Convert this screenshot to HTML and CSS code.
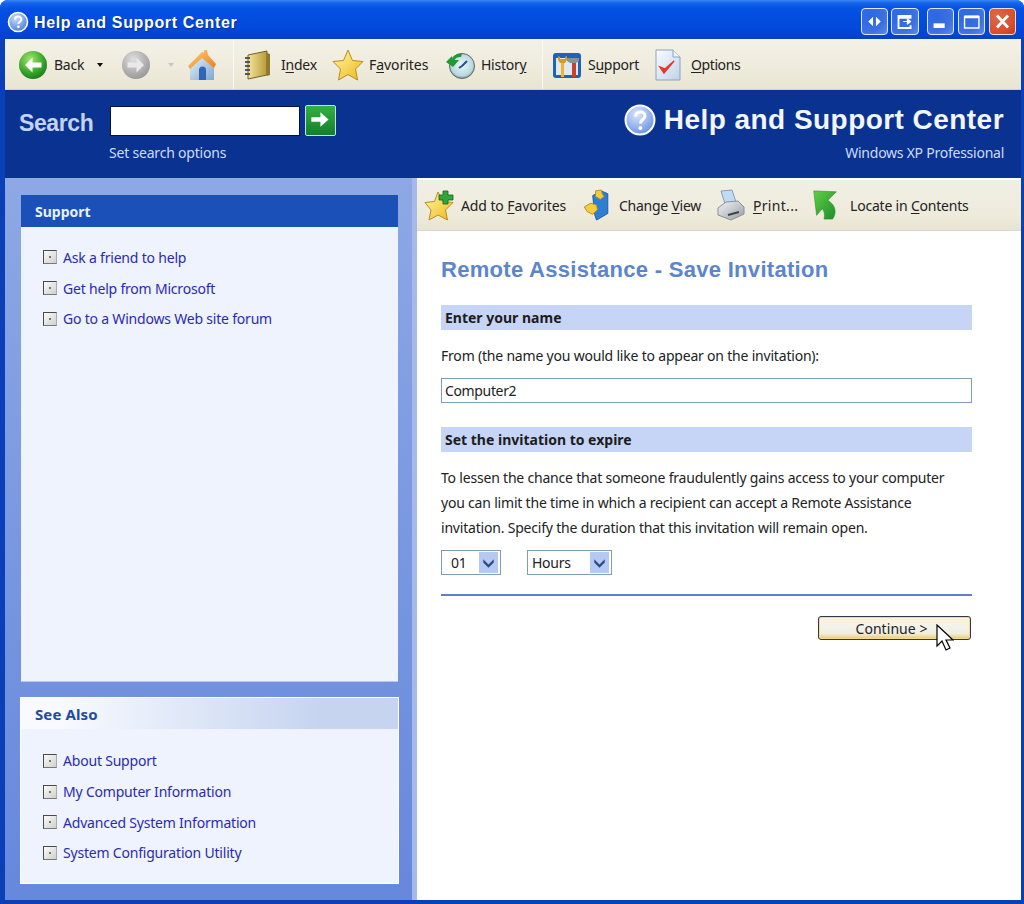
FILE: index.html
```html
<!DOCTYPE html>
<html lang="en">
<head>
<meta charset="utf-8">
<title>Help and Support Center</title>
<link rel="stylesheet" href="styles.css">
</head>
<body>
<div class="window">
  <header class="titlebar">
    <svg class="title-icon" viewBox="0 0 22 22"><defs><radialGradient id="ti" cx=".4" cy=".3" r=".8"><stop offset="0" stop-color="#c8dcfa"/><stop offset="1" stop-color="#3f74d8"/></radialGradient></defs><circle cx="11" cy="11" r="9.5" fill="url(#ti)" stroke="#fff" stroke-width="1.6"/><path d="M8 8.6c0-4 6.4-4 6.4-.3 0 2.400-3 2.400-3 4.700" fill="none" stroke="#fff" stroke-width="2"/><circle cx="11.400" cy="15.800" r="1.300" fill="#fff"/></svg>
    <span class="title-text">Help and Support Center</span>
    <div class="winbtns">
      <div class="winbtn winbtn-a"><svg viewBox="0 0 26 26"><path d="M11.500 8v10l-5-5zM14.500 8v10l5-5z" fill="#fff"/></svg></div>
      <div class="winbtn winbtn-b"><svg viewBox="0 0 28 26"><path d="M20 17v3H7V7h13v2H7" fill="none" stroke="#fff" stroke-width="2"/><path d="M12 13h7M16.500 10l4 3-4 3z" fill="#fff" stroke="#fff"/></svg></div>
      <div class="winbtn winbtn-c"><svg viewBox="0 0 27 26"><rect x="6" y="15" width="12" height="5" fill="#fff"/></svg></div>
      <div class="winbtn winbtn-d"><svg viewBox="0 0 27 26"><path d="M6 7.500h15.500v12.500H6z" fill="none" stroke="#fff" stroke-width="1.500"/><path d="M6 8h15.500" stroke="#fff" stroke-width="3"/></svg></div>
      <div class="winbtn winbtn-e"><svg viewBox="0 0 27 26"><path d="M7.500 6.500l12 13M19.500 6.500l-12 13" stroke="#fff" stroke-width="3"/></svg></div>
    </div>
  </header>

  <nav class="toolbar">
    <div class="tool t-back">
      <svg class="icon30" viewBox="0 0 30 30"><defs><radialGradient id="gb" cx=".4" cy=".3" r=".8"><stop offset="0" stop-color="#a5e56e"/><stop offset=".6" stop-color="#37a52a"/><stop offset="1" stop-color="#12701c"/></radialGradient></defs><circle cx="15" cy="15" r="14" fill="url(#gb)"/><path d="M7 15l7.500-7.500v5h9v5h-9v5z" fill="#fff"/></svg>
      <span>Back</span><i class="caret"></i>
    </div>
    <div class="tool t-fwd">
      <svg class="icon30" viewBox="0 0 30 30"><defs><radialGradient id="gf" cx=".4" cy=".3" r=".8"><stop offset="0" stop-color="#dedede"/><stop offset="1" stop-color="#909090"/></radialGradient></defs><circle cx="15" cy="15" r="14" fill="url(#gf)"/><path d="M23 15l-7.500-7.500v5h-9v5h9v5z" fill="#e9e9e9"/></svg>
      <i class="caret caret-off"></i>
    </div>
    <div class="tool t-home">
      <svg class="icon32" viewBox="0 0 32 32"><defs><linearGradient id="hw" x1="0" y1="0" x2="1" y2="1"><stop offset="0" stop-color="#e8f2fb"/><stop offset="1" stop-color="#7fa6cc"/></linearGradient><linearGradient id="hr" x1="0" y1="0" x2="1" y2="1"><stop offset="0" stop-color="#fcd07a"/><stop offset="1" stop-color="#ee7c1c"/></linearGradient></defs><path d="M4 15l12-8 12 8v16H4z" fill="url(#hw)"/><path d="M2 17L16 3l2 .5V1h3l1 5 8 9-2 4L16 9 4 20z" fill="url(#hr)"/><path d="M13 31V21a3.500 3.500 0 0 1 7 0v10z" fill="#2f66b5"/></svg>
    </div>
    <i class="sep sep-a"></i>
    <div class="tool t-index">
      <svg class="icon30" viewBox="0 0 30 30"><defs><linearGradient id="nb" x1="0" y1="0" x2="1" y2="0"><stop offset="0" stop-color="#f5e49a"/><stop offset="1" stop-color="#b89a38"/></linearGradient></defs><path d="M5 5l19-4v24L5 29z" fill="url(#nb)" stroke="#6b6230"/><path d="M24 3l3 1v21l-3 1z" fill="#8d7a2a"/><path d="M2 8h5M2 12h5M2 16h5M2 20h5M2 24h5" stroke="#555" stroke-width="2"/></svg>
      <span>I<u>n</u>dex</span>
    </div>
    <div class="tool t-fav">
      <svg class="icon32" viewBox="0 0 32 32"><defs><linearGradient id="st" x1="0" y1="0" x2="1" y2="1"><stop offset="0" stop-color="#fff6a8"/><stop offset="1" stop-color="#eeb818"/></linearGradient></defs><path d="M16 1l4.500 10.500L31 12.500l-7.500 7.500 2 11L16 25.500 6.500 31l2-11L1 12.500l10.500-1z" fill="url(#st)" stroke="#b98d1c"/></svg>
      <span>F<u>a</u>vorites</span>
    </div>
    <div class="tool t-hist">
      <svg class="icon30" viewBox="0 0 30 30"><defs><radialGradient id="cl" cx=".5" cy=".45" r=".6"><stop offset="0" stop-color="#eef8f8"/><stop offset=".75" stop-color="#b5d8de"/><stop offset="1" stop-color="#58646a"/></radialGradient></defs><circle cx="17" cy="16" r="12.500" fill="url(#cl)" stroke="#666"/><path d="M17 16l5-5M17 16l-3 2" stroke="#26508c" stroke-width="2"/><path d="M1 12l6-6v3.500C9 4 14 3 17 4l-1 3c-3-.5-5 .5-6.500 3H14l-6 7z" fill="#1f9a30"/></svg>
      <span>Histor<u>y</u></span>
    </div>
    <i class="sep sep-b"></i>
    <div class="tool t-sup">
      <svg class="icon30" viewBox="0 0 30 30"><rect x="1" y="3" width="28" height="25" rx="3" fill="#1f63b8"/><rect x="4" y="8" width="22" height="17" fill="#dfe9f5"/><path d="M9 10h3v17H9z" fill="#eeb52c"/><path d="M6 6v4l2 3h5l2-3V6l-2 1v2H8V7z" fill="#d79a1e"/><path d="M20 12h4v15h-4z" fill="#c8412a"/><path d="M15 8h12v3l-3 2h-6l-3-2z" fill="#8d8f95"/></svg>
      <span>S<u>u</u>pport</span>
    </div>
    <div class="tool t-opt">
      <svg class="icon26" viewBox="0 0 26 32"><defs><linearGradient id="dc" x1="0" y1="0" x2="1" y2="1"><stop offset="0" stop-color="#fbfdff"/><stop offset="1" stop-color="#bed2ea"/></linearGradient></defs><path d="M1 1h17l7 7v23H1z" fill="url(#dc)" stroke="#8aa2bd"/><path d="M18 1v7h7" fill="#eef4fb" stroke="#8aa2bd"/><path d="M5 18l4 6 10-12-9 8z" fill="#e43a2e" stroke="#e43a2e" stroke-width="1.500"/></svg>
      <span><u>O</u>ptions</span>
    </div>
  </nav>

  <section class="banner">
    <div class="search">
      <span class="search-label">Search</span>
      <div class="search-field">
        <div class="search-row">
          <div class="search-input"></div>
          <div class="search-go"><svg viewBox="0 0 32 32"><path d="M7 13.500h10V8l9 8-9 8v-5.500H7z" fill="#fff"/></svg></div>
        </div>
        <span class="small-note search-note">Set search options</span>
      </div>
    </div>
    <div class="brand">
      <div class="brand-row">
        <svg class="brand-icon" viewBox="0 0 32 32"><defs><radialGradient id="bi" cx=".4" cy=".3" r=".8"><stop offset="0" stop-color="#dbe7fb"/><stop offset="1" stop-color="#5f8adf"/></radialGradient></defs><circle cx="16" cy="16" r="14.500" fill="url(#bi)" stroke="#fff" stroke-width="2"/><path d="M11.500 12.500c0-6 9.500-6 9.500-.5 0 3.500-4.600 3.500-4.600 7.500" fill="none" stroke="#fff" stroke-width="3"/><circle cx="16.400" cy="24" r="2" fill="#fff"/></svg>
        <span class="brand-title">Help and Support Center</span>
      </div>
      <span class="small-note">Windows XP Professional</span>
    </div>
  </section>

  <div class="main">
    <aside class="sidebar">
      <section class="panel panel-support">
        <h2 class="panel-head">Support</h2>
        <ul class="links">
          <li><i class="bullet"></i><a>Ask a friend to help</a></li>
          <li><i class="bullet"></i><a>Get help from Microsoft</a></li>
          <li><i class="bullet"></i><a>Go to a Windows Web site forum</a></li>
        </ul>
      </section>
      <section class="panel panel-also">
        <h2 class="panel-head panel-head-light">See Also</h2>
        <ul class="links links-also">
          <li><i class="bullet"></i><a>About Support</a></li>
          <li><i class="bullet"></i><a>My Computer Information</a></li>
          <li><i class="bullet"></i><a>Advanced System Information</a></li>
          <li><i class="bullet"></i><a>System Configuration Utility</a></li>
        </ul>
      </section>
    </aside>

    <main class="content">
      <nav class="subbar">
        <div class="tool s-add">
          <svg class="icon32" viewBox="0 0 32 32"><defs><linearGradient id="st2" x1="0" y1="0" x2="1" y2="1"><stop offset="0" stop-color="#fff6a8"/><stop offset="1" stop-color="#eeb818"/></linearGradient></defs><path d="M14 3l4.500 9.500L29 13.500l-7.500 7.500 2 10L14 26 5 31l2-10L1 13.500l9.500-1z" fill="url(#st2)" stroke="#b98d1c"/><path d="M19 2h5v4h5v5h-5v4h-5v-4h-4V6h4z" fill="#2fa53a" stroke="#14661e" stroke-width=".8"/></svg>
          <span>Add to <u>F</u>avorites</span>
        </div>
        <div class="tool s-view">
          <svg class="icon27" viewBox="0 0 28 34"><path d="M10 7l9-5 7 3v21l-12 7-2-6z" fill="#2c7fd3" stroke="#1e5c9f"/><path d="M13 2l6-1 1 4 2 3-4 3-5-3z" fill="#f4cc3c" stroke="#b78c28"/><path d="M1 19l7-4 6 2 1 5-5 5-6-3z" fill="#f4cc3c" stroke="#b78c28"/></svg>
          <span>Change <u>V</u>iew</span>
        </div>
        <div class="tool s-print">
          <svg class="icon28" viewBox="0 0 28 32"><defs><linearGradient id="pr" x1="0" y1="0" x2="1" y2="1"><stop offset="0" stop-color="#f2f4f6"/><stop offset="1" stop-color="#999ea6"/></linearGradient></defs><path d="M4 2l11-1 4 12-11 2z" fill="#bedcf5" stroke="#8a9fb5"/><path d="M1 19l8-6 12-1 6 6v7l-13 6-13-5z" fill="url(#pr)" stroke="#8b8f96"/><path d="M11 26l11-3" stroke="#444" stroke-width="2"/></svg>
          <span><u>P</u>rint...</span>
        </div>
        <div class="tool s-locate">
          <svg class="icon26" viewBox="0 0 26 34"><defs><linearGradient id="lc" x1="0" y1="0" x2="1" y2="1"><stop offset="0" stop-color="#62d044"/><stop offset="1" stop-color="#1c8c2c"/></linearGradient></defs><path d="M0 2l3 26 6-7c2 2 3 6 2 11h9c5-7 3-15-5-20l9-9z" fill="url(#lc)" stroke="#2a8a30" stroke-width=".6"/></svg>
          <span>Locate in <u>C</u>ontents</span>
        </div>
      </nav>

      <article class="article">
        <h1 class="page-title">Remote Assistance - Save Invitation</h1>
        <h3 class="bar">Enter your name</h3>
        <label class="from-label">From (the name you would like to appear on the invitation):</label>
        <div class="textbox">Computer2</div>
        <h3 class="bar bar-second">Set the invitation to expire</h3>
        <p class="para">To lessen the chance that someone fraudulently gains access to your computer you can limit the time in which a recipient can accept a Remote Assistance invitation. Specify the duration that this invitation will remain open.</p>
        <div class="selects">
          <div class="select select-num"><span>01</span><i class="drop"><svg viewBox="0 0 18 20"><path d="M4 7l5 5 5-5v3l-5 5-5-5z" fill="#2e4a86"/></svg></i></div>
          <div class="select select-unit"><span>Hours</span><i class="drop"><svg viewBox="0 0 18 20"><path d="M4 7l5 5 5-5v3l-5 5-5-5z" fill="#2e4a86"/></svg></i></div>
        </div>
        <hr class="rule">
        <div class="actions">
          <div class="btn">Continue &gt;</div>
          <svg class="cursor" viewBox="0 0 18 28"><path d="M1 1v21l5-5 4 9 4-2-4-8h7z" fill="#fff" stroke="#000" stroke-width="1.200"/></svg>
        </div>
      </article>
    </main>
  </div>
</div>
</body>
</html>
```
FILE: styles.css
```css
* { box-sizing: border-box; }
html, body { margin: 0; padding: 0; background: #fff; }
body { font-family: "Noto Sans", "Liberation Sans", sans-serif; font-size: 14px; color: #222; }
.window { width: 1024px; height: 904px; display: flex; flex-direction: column; background: #0a3fb8; border-radius: 8px 8px 0 0; overflow: hidden; }

/* title bar */
.titlebar { height: 39px; flex: none; display: flex; align-items: center; padding: 0 8px 0 7px; background: linear-gradient(#3a86f4 0, #1464ea 3px, #0451e2 9px, #0249dc 28px, #0540c6 100%); }
.title-icon { width: 22px; height: 22px; flex: none; margin-top: 4px; }
.title-text { margin: 7px 0 0 5px; font-family: "Liberation Sans", sans-serif; font-weight: 700; font-size: 16px; letter-spacing: .65px; color: #fff; text-shadow: 1px 1px 1px #0a2f90; white-space: nowrap; }
.winbtns { margin-left: auto; display: flex; margin-top: 4px; }
.winbtn { height: 27px; border: 1px solid #dfe9fb; border-radius: 4px; background: radial-gradient(circle at 30% 30%, #2a68e2, #3c70e0 60%, #5d8ce8); }
.winbtn svg { display: block; width: 100%; height: 100%; }
.winbtn-a { width: 27px; margin-right: 3px; }
.winbtn-b { width: 28px; margin-right: 8px; }
.winbtn-c { width: 27px; margin-right: 4px; }
.winbtn-d { width: 27px; margin-right: 4px; }
.winbtn-e { width: 27px; background: radial-gradient(circle at 30% 30%, #d86a4a, #dc5030 60%, #c03c20); border-color: #f0dfd8; }

/* toolbars */
.toolbar { height: 51px; flex: none; margin: 0 3px 0 5px; display: flex; align-items: center; background: linear-gradient(#f3f1e7, #efebdc 60%, #e9e5d2); border-top: 1px solid #f6f4ec; border-bottom: 1px solid #cfd2cf; }
.tool { display: flex; align-items: center; flex: none; color: #222; white-space: nowrap; font-size: 14px; letter-spacing: -.25px; }
.icon26 { width: 26px; height: 32px; flex: none; }
.icon27 { width: 27px; height: 32px; flex: none; }
.icon28 { width: 28px; height: 32px; flex: none; }
.icon30 { width: 30px; height: 30px; flex: none; }
.icon32 { width: 32px; height: 32px; flex: none; }
.tool span { margin-left: 6px; }
.tool u { text-underline-offset: 2px; }
.caret { width: 0; height: 0; border: 3.5px solid transparent; border-top: 4px solid #111; border-bottom: 0; margin-left: 13px; flex: none; }
.caret-off { border-top-color: #c9c7bc; margin-left: 17px; }
.sep { width: 1px; height: 49px; background: #d8d5c6; border-right: 1px solid #fafaf4; flex: none; }
.t-back { margin-left: 13px; width: 90px; }
.t-fwd { margin-left: 13px; width: 54px; }
.t-home { margin-left: 11px; }
.sep-a { margin-left: 15px; }
.t-index { margin-left: 9px; width: 74px; }
.t-index span { margin-left: 8px; }
.t-fav { margin-left: 15px; width: 97px; }
.t-fav span { margin-left: 5px; letter-spacing: -.05px; }
.t-hist { margin-left: 16px; width: 81px; }
.sep-b { margin-left: 16px; }
.t-sup { margin-left: 9px; width: 86px; }
.t-opt { margin-left: 17px; }
.t-opt span { margin-left: 10px; letter-spacing: -.4px; }

/* banner */
.banner { height: 88px; flex: none; margin: 0 3px 0 5px; display: flex; justify-content: space-between; padding: 15px 17px 0 14px; background: #0a3291; color: #cfdcf5; }
.search { display: flex; }
.search-label { width: 91px; font-family: "Liberation Sans", sans-serif; font-weight: 700; font-size: 23px; line-height: 36px; color: #c3d3f2; letter-spacing: -.4px; }
.search-field { display: flex; flex-direction: column; }
.search-row { display: flex; gap: 5px; padding-top: 1px; }
.search-input { width: 190px; height: 30px; background: #fff; border: 1px solid #06123e; }
.search-go { width: 31px; height: 31px; margin-top: -1px; border: 1px solid #c9dcec; border-radius: 2px; background: linear-gradient(#35b040, #12802c); }
.search-go svg { display: block; width: 100%; height: 100%; margin: -1px; }
.small-note { display: block; margin-top: 7px; font-size: 14px; line-height: 20px; letter-spacing: -.25px; white-space: nowrap; }
.search-note { margin-left: -1px; letter-spacing: -.2px; }
.brand { display: flex; flex-direction: column; align-items: flex-end; }
.brand-row { display: flex; align-items: center; gap: 8px; height: 30px; }
.brand-icon { width: 32px; height: 32px; }
.brand-title { margin-top: -1px; font-family: "Liberation Sans", sans-serif; font-weight: 700; font-size: 28px; letter-spacing: .45px; color: #f2f6fd; white-space: nowrap; }
.brand .small-note { margin-top: 8px; }

/* main */
.main { flex: 1; min-height: 0; display: flex; margin: 0 3px 4px 5px; }
.sidebar { width: 412px; flex: none; display: flex; flex-direction: column; padding: 17px 19px 16px 16px; background: linear-gradient(#8ea8e4, #6688dd); border-right: 5px solid #a5bae9; }
.panel { background: #eff3fd; }
.panel-support { flex: 1; border-bottom: 1px solid #b6c9e8; margin-right: -5px; }
.panel-also { margin: 15px -6px 0 -1px; height: 187px; border: 1px solid #fff; }
.panel-head { margin: 0; height: 32px; padding-left: 14px; font-family: "Noto Sans", sans-serif; font-weight: 700; font-size: 14px; line-height: 33px; color: #eaf0fb; background: #1a50b8; }
.panel-head-light { height: 31px; padding-left: 14px; color: #1f4c9e; font-size: 15px; letter-spacing: .1px; background: linear-gradient(90deg, #f8faff 10%, #c6d4f0 80%); }
.links { list-style: none; margin: 0; padding: 15px 0 0 22px; }
.links-also { padding: 16.5px 0 0 22px; }
.links li { display: flex; align-items: center; height: 30.7px; }
.links a { margin-left: 6px; color: #2b2baf; font-size: 14px; letter-spacing: -.2px; white-space: nowrap; }
.bullet { width: 14px; height: 14px; flex: none; position: relative; border: 1px solid #4a4a4a; border-right-color: #aaa; border-bottom-color: #777; background: linear-gradient(135deg, #fbfbf7, #cfd0cc); }
.bullet::after { content: ""; position: absolute; left: 5px; top: 5px; width: 2px; height: 2px; background: #777; }

/* content */
.content { flex: 1; min-width: 0; display: flex; flex-direction: column; background: #fff; }
.subbar { height: 51px; flex: none; margin-top: 2px; display: flex; align-items: center; background: linear-gradient(#f1efe5, #eeebdc 70%, #e8e4d3); border-bottom: 1px solid #d8d8d0; }
.s-add { margin-left: 7px; width: 159px; letter-spacing: -.1px; }
.s-add span { margin-left: 5px; }
.s-view { width: 134px; }
.s-view span { margin-left: 9px; }
.s-print { width: 96px; letter-spacing: .3px; }
.s-print span { margin-left: 8px; }
.s-locate { letter-spacing: -.2px; }
.s-locate span { margin-left: 11px; }
.article { padding: 0 0 0 24px; width: 555px; }
.page-title { margin: 24px 0 0; font-family: "Liberation Sans", sans-serif; font-weight: 700; font-size: 22px; line-height: 30px; letter-spacing: .3px; color: #5b85cc; white-space: nowrap; }
.bar { margin: 20px 0 0; height: 25px; padding-left: 4px; line-height: 25px; font-size: 14px; font-weight: 700; color: #1c1c1c; background: #c6d4f5; }
.bar-second { margin-top: 24px; }
.from-label { display: block; margin-top: 16px; line-height: 20px; letter-spacing: -.2px; }
.textbox { margin-top: 12px; height: 25px; padding-left: 3px; line-height: 23px; border: 1px solid #7f9db9; letter-spacing: -.35px; }
.para { width: 515px; margin: 13px 0 0; line-height: 25.2px; letter-spacing: -.2px; color: #222; }
.selects { display: flex; gap: 26px; margin-top: 9px; }
.select { height: 25px; display: flex; align-items: center; justify-content: space-between; border: 1px solid #7f9db9; padding: 1px 2px 1px 4px; letter-spacing: -.25px; }
.select-num { width: 60px; }
.select-num span { margin-left: 5px; }
.select-unit { width: 85px; }
.drop { width: 19px; height: 21px; background: #b6c9f2; flex: none; }
.drop svg { display: block; width: 100%; height: 100%; }
.rule { margin: 19px 0 0; height: 2px; border: 0; background: #5f7fc8; }
.actions { position: relative; display: flex; justify-content: flex-end; margin-top: 20px; padding-right: 1px; }
.btn { width: 153px; height: 24px; line-height: 23px; text-align: center; padding-right: 6px; border: 1px solid #2f3a48; border-radius: 3px; letter-spacing: .05px; background: linear-gradient(#fbf3d6 0, #f4f3ec 40%, #f0eee0 75%, #f2c860 100%); box-shadow: inset 0 0 0 1px #f6d88c; }
.cursor { position: absolute; left: 495px; top: 8px; width: 18px; height: 28px; }
```
